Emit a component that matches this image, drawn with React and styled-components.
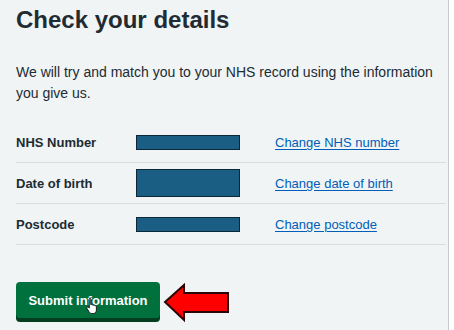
import React from "react";
import styled, { createGlobalStyle } from "styled-components";

const Global = createGlobalStyle`
  html, body { margin: 0; padding: 0; background: #ffffff; }
  body { font-family: "Liberation Sans", Arial, sans-serif; color: #212b32; }
`;

const Page = styled.main`
  box-sizing: border-box;
  width: 449px;
  min-height: 330px;
  padding: 6px 2px 0 16px;
  background: #f0f4f5;
  border-right: 1px solid #c6cbce;
`;

const Title = styled.h1`
  margin: 0;
  font-size: 24px;
  line-height: 28px;
  font-weight: 700;
  color: #212b32;
`;

const Lead = styled.p`
  margin: 28px 0 0;
  font-size: 14px;
  line-height: 21px;
  color: #212b32;
`;

const List = styled.dl`
  margin: 18px 0 0;
  padding: 0;
`;

const Row = styled.div`
  box-sizing: border-box;
  height: 41px;
  display: grid;
  grid-template-columns: 120px 139px 1fr;
  align-items: center;
  border-bottom: 1px solid #d8dde0;
`;

const Label = styled.dt`
  font-size: 13px;
  font-weight: 700;
`;

const Value = styled.dd`
  margin: 0;
  display: flex;
  align-items: center;
`;

const Redaction = styled.span`
  display: block;
  box-sizing: border-box;
  width: 104px;
  height: ${(p) => p.$h}px;
  background: #1b5e83;
  border: 1.5px solid #0b2838;
`;

const ChangeLink = styled.a`
  font-size: 13px;
  color: #005eb8;
  text-decoration: underline;
  text-underline-offset: 2px;
  cursor: pointer;
`;

const Actions = styled.div`
  margin-top: 32px;
  display: flex;
  align-items: center;
  gap: 3px;
`;

const Button = styled.button`
  position: relative;
  box-sizing: border-box;
  height: 36px;
  width: 144px;
  padding: 0;
  border: none;
  border-radius: 4px;
  background: #00703c;
  box-shadow: 0 4px 0 #003e1f;
  color: #ffffff;
  font-family: "Liberation Sans", Arial, sans-serif;
  font-size: 13px;
  font-weight: 700;
  cursor: pointer;
`;

const Cursor = styled.svg`
  position: absolute;
  left: 70px;
  top: 15px;
`;

const Arrow = styled.svg`
  display: block;
  margin-top: 6px;
`;

const rows = [
  { label: "NHS Number", h: 15, link: "Change NHS number" },
  { label: "Date of birth", h: 28, link: "Change date of birth" },
  { label: "Postcode", h: 15, link: "Change postcode" },
];

export default function App() {
  return (
    <>
      <Global />
      <Page>
        <Title>Check your details</Title>
        <Lead>
          We will try and match you to your NHS record using the information
          you give us.
        </Lead>
        <List>
          {rows.map((r) => (
            <Row key={r.label}>
              <Label>{r.label}</Label>
              <Value>
                <Redaction $h={r.h} />
              </Value>
              <dd style={{ margin: 0 }}>
                <ChangeLink>{r.link}</ChangeLink>
              </dd>
            </Row>
          ))}
        </List>
        <Actions>
          <Button>
            Submit information
            <Cursor width="12" height="17" viewBox="0 0 12 17">
              <path
                d="M3.5 1.2c.7 0 1.2.5 1.2 1.2v5.2l.3-.1c.5-.3 1.1 0 1.3.4.5-.3 1.1-.1 1.4.4.5-.3 1.2 0 1.4.5.6-.2 1.3.2 1.3.9v3.4c0 1.8-1.3 3.4-3.1 3.4H5.6c-1 0-1.8-.5-2.3-1.3L1 11.5c-.4-.6-.1-1.3.5-1.5.4-.2.9 0 1.2.3l.6.8V2.4c0-.7.5-1.2 1.2-1.2z"
                fill="#ffffff"
                stroke="#111111"
                strokeWidth="0.9"
                strokeLinejoin="round"
              />
            </Cursor>
          </Button>
          <Arrow width="67" height="40" viewBox="0 0 67 40">
            <polygon
              points="2,19 21,2 21,10 65,10 65,29 21,29 21,37"
              fill="#ff0000"
              stroke="#2a0606"
              strokeWidth="2"
              strokeLinejoin="miter"
            />
          </Arrow>
        </Actions>
      </Page>
    </>
  );
}
